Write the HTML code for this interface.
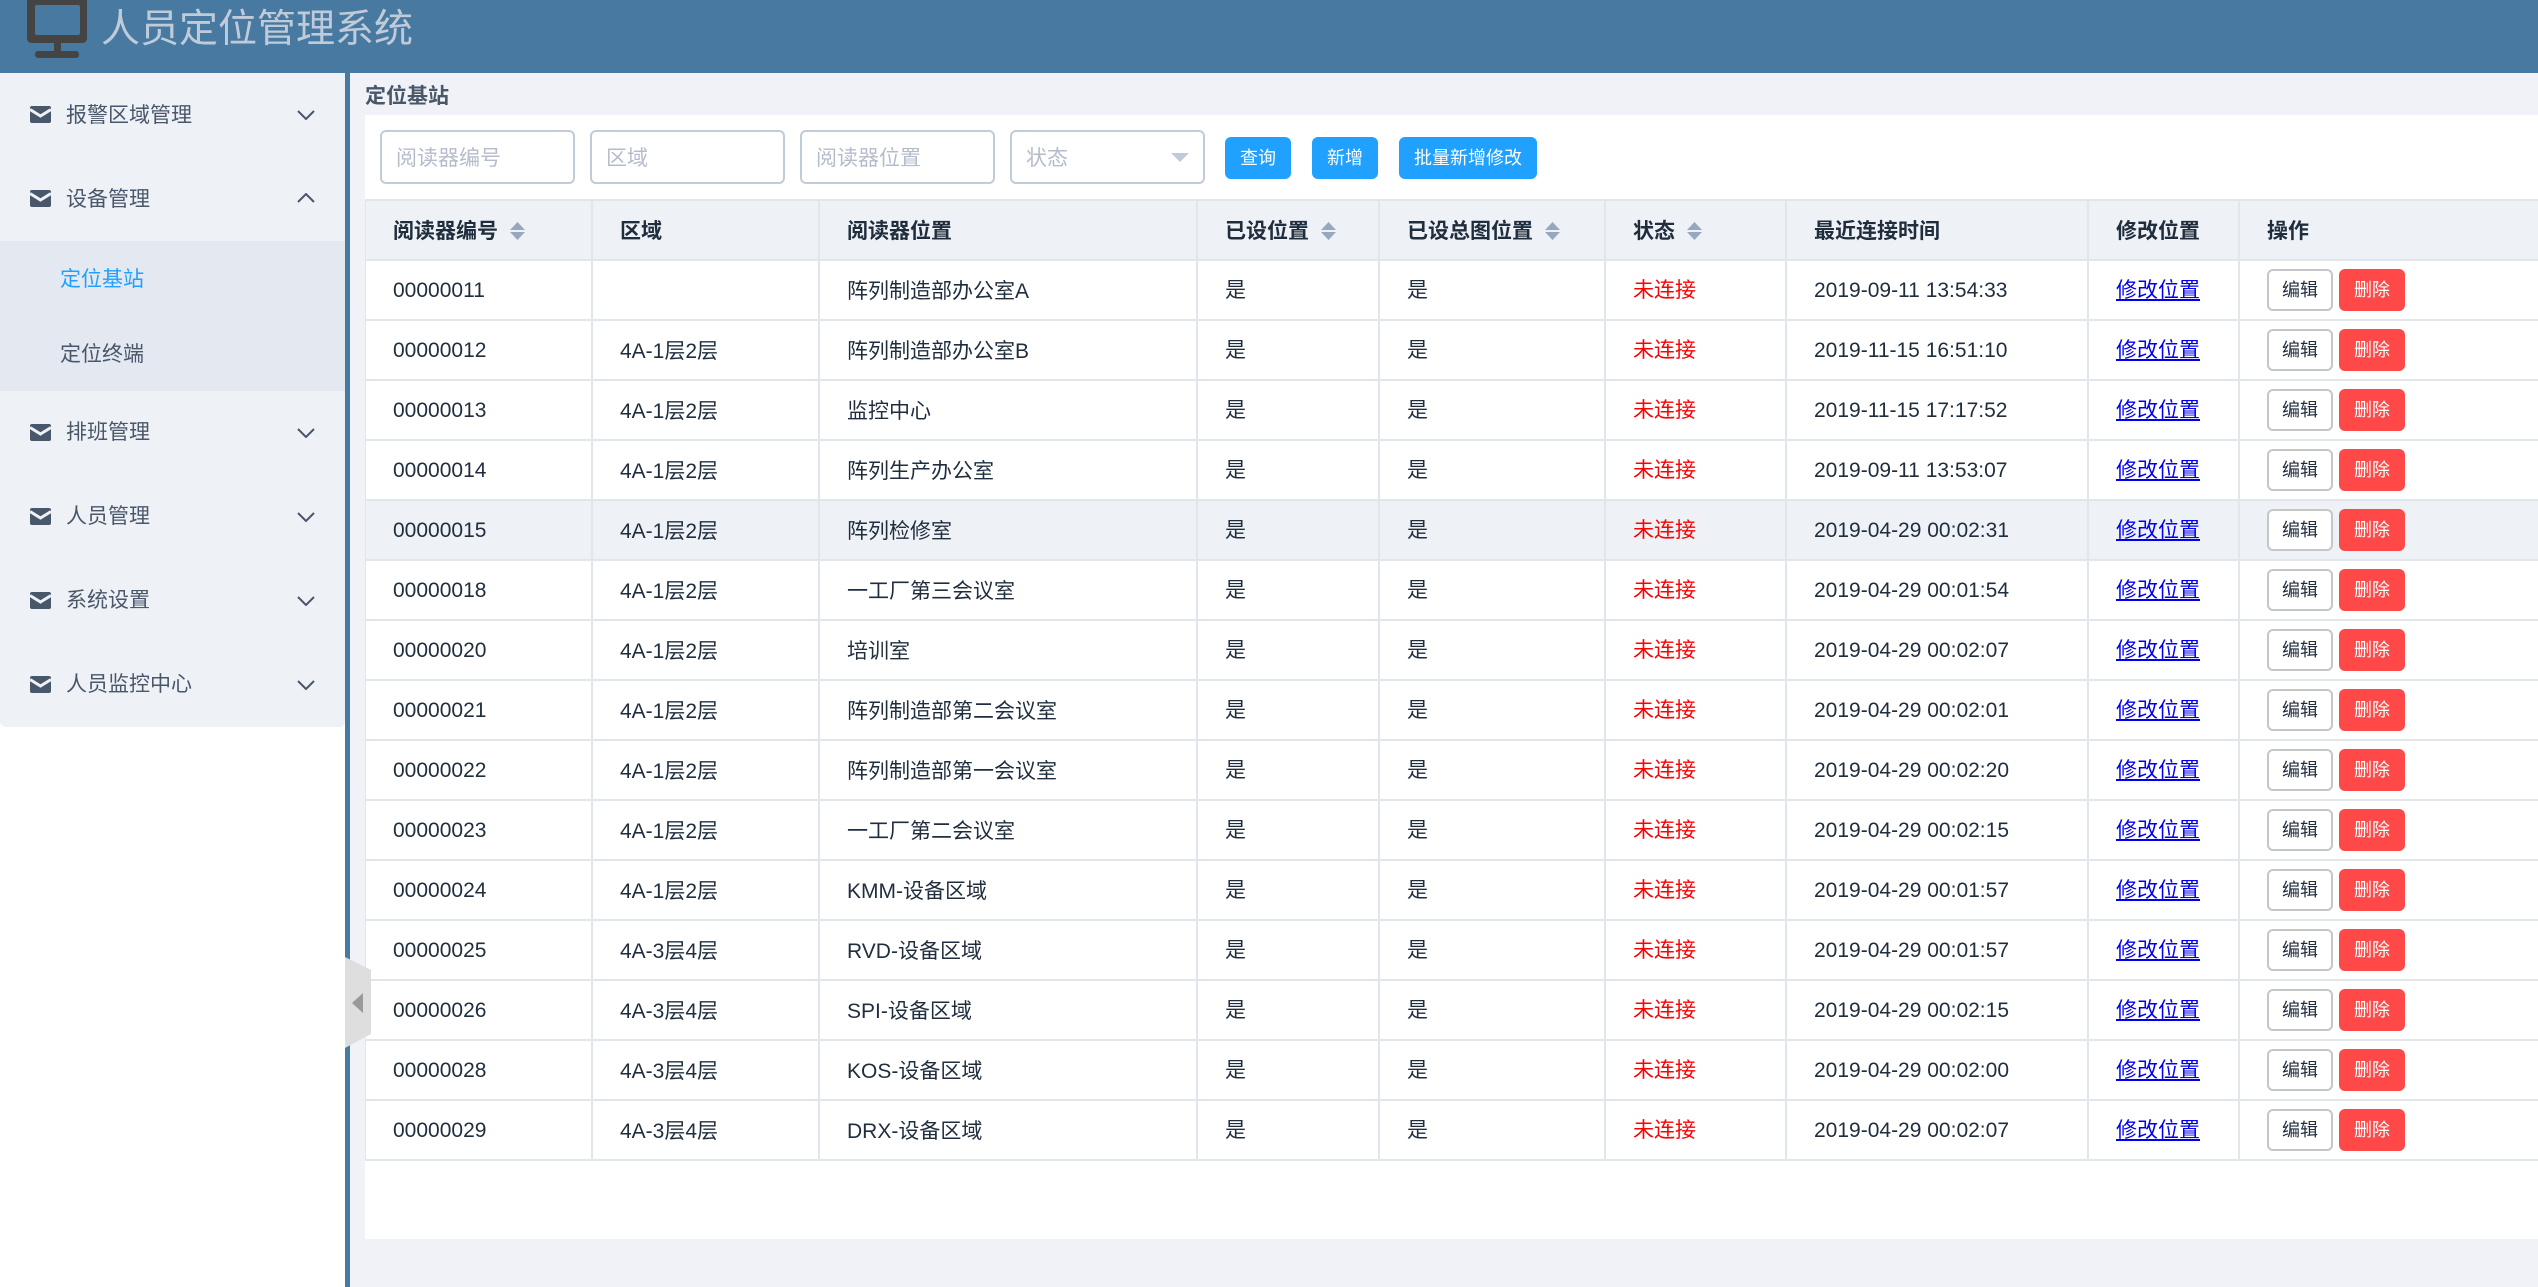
<!DOCTYPE html>
<html lang="zh"><head><meta charset="utf-8"><title>人员定位管理系统</title>
<style>
*{box-sizing:border-box}
html,body{margin:0;padding:0;width:2538px;height:1287px;overflow:hidden;background:#fff}
body{position:relative;font-family:"Liberation Sans","Noto Sans CJK SC",sans-serif;font-size:21px;color:#1f2d3d}
.abs{position:absolute}
#hdr{left:0;top:0;width:2538px;height:73px;background:#487aa1}
#title{left:101px;top:3px;height:54px;line-height:54px;font-size:39px;color:#bfcbd9;white-space:nowrap}
#side{left:0;top:73px;width:345px;height:654px;background:#eef1f6;border-radius:0 0 6px 6px}
#bar{left:345px;top:73px;width:5px;height:1214px;background:#487aa1}
#main{left:350px;top:73px;width:2188px;height:1214px;background:#f0f2f7}
#sub{left:0;top:241px;width:345px;height:150px;background:#e4e8f1}
.mi{left:66px;height:30px;line-height:30px;color:#48576a;white-space:nowrap}
.si{left:60px;height:30px;line-height:30px;color:#48576a;white-space:nowrap}
.ic{left:30px;width:21px;height:17px}
.ch{left:297px;width:18px;height:10px}
#ptitle{left:365px;top:82px;height:30px;line-height:30px;font-weight:bold;color:#48576a}
#panel{left:365px;top:115px;width:2173px;height:1124px;background:#fff}
.inp{top:130px;width:195px;height:54px;border:2px solid #c0ccda;border-radius:6px;background:#fff;color:#b4bccc;line-height:53px;padding-left:14px;white-space:nowrap}
.btn{top:137px;height:42px;line-height:42px;border-radius:6px;background:#20a0ff;color:#fff;font-size:18px;text-align:center;white-space:nowrap}
table{position:absolute;left:365px;top:199px;width:2173px;border-collapse:separate;border-spacing:0;table-layout:fixed;border-top:2px solid #e1e6ec}
th,td{height:60px;padding:0 0 0 27px;border-right:2px solid #e1e6ec;border-bottom:2px solid #e1e6ec;text-align:left;vertical-align:middle;white-space:nowrap;font-size:21px;color:#1f2d3d}
th{background:#eef1f6;font-weight:bold}
th:first-child,td:first-child{border-left:1px solid #e1e6ec}
th:last-child,td:last-child{border-right:0}
tr.h td{background:#eef1f6}
td.r{color:#f00}
td a{color:#00e;text-decoration:underline}
tbody td:nth-child(1),tbody td:nth-child(7){padding-top:2px}
tbody td:nth-child(4),tbody td:nth-child(5),tbody td:nth-child(6),tbody td:nth-child(8){padding-bottom:2px}
.s{display:inline-block;vertical-align:middle;width:15px;height:18px;margin-left:12px;position:relative;top:-1px}
.b1,.b2{display:inline-block;height:42px;width:66px;line-height:39px;border-radius:6px;font-size:18px;text-align:center;vertical-align:middle}
.b1{border:2px solid #c4c6c8;background:#fff;color:#1f2d3d}
.b2{border:2px solid #ff4949;background:#ff4949;color:#fff;margin-left:6px}
</style></head><body>
<svg width="0" height="0" style="position:absolute"><defs>
<g id="env"><rect width="21" height="17" rx="2" fill="#48576a"/><path d="M0 3.5 10.5 10 21 3.5" fill="none" stroke="#eef1f6" stroke-width="3"/></g>
<path id="sort" d="M7.5 0 15 8H0ZM0 10H15L7.500 18Z" fill="#97a8be"/>
</defs></svg>
<div class="abs" id="main"></div>
<div class="abs" id="hdr"></div>
<svg class="abs" style="left:27px;top:0" width="60" height="58"><path fill="#444" fill-rule="evenodd" d="M0 0H60V38Q60 43 55 43H34V51H49Q52 51 52 54.500T49 58H11Q8 58 8 54.500T11 51H27V43H5Q0 43 0 38ZM10 5Q8 5 8 7V33Q8 35 10 35H51Q53 35 53 33V7Q53 5 51 5Z"/></svg>
<div class="abs" id="title">人员定位管理系统</div>
<div class="abs" id="side"></div>
<div class="abs" id="sub"></div>
<div class="abs" id="bar"></div>

<svg class="abs ic" style="top:106px"><use href="#env"/></svg><div class="abs mi" style="top:101px">报警区域管理</div>
<svg class="abs ch" style="top:110px"><path d="M1 1 9 9 17 1" fill="none" stroke="#48576a" stroke-width="2"/></svg>
<svg class="abs ic" style="top:190px"><use href="#env"/></svg><div class="abs mi" style="top:185px">设备管理</div>
<svg class="abs ch" style="top:193px"><path d="M1 9 9 1 17 9" fill="none" stroke="#48576a" stroke-width="2"/></svg>
<div class="abs si" style="top:265px;color:#20a0ff">定位基站</div>
<div class="abs si" style="top:340px">定位终端</div>
<svg class="abs ic" style="top:424px"><use href="#env"/></svg><div class="abs mi" style="top:418px">排班管理</div>
<svg class="abs ch" style="top:428px"><path d="M1 1 9 9 17 1" fill="none" stroke="#48576a" stroke-width="2"/></svg>
<svg class="abs ic" style="top:508px"><use href="#env"/></svg><div class="abs mi" style="top:502px">人员管理</div>
<svg class="abs ch" style="top:512px"><path d="M1 1 9 9 17 1" fill="none" stroke="#48576a" stroke-width="2"/></svg>
<svg class="abs ic" style="top:592px"><use href="#env"/></svg><div class="abs mi" style="top:586px">系统设置</div>
<svg class="abs ch" style="top:596px"><path d="M1 1 9 9 17 1" fill="none" stroke="#48576a" stroke-width="2"/></svg>
<svg class="abs ic" style="top:676px"><use href="#env"/></svg><div class="abs mi" style="top:670px">人员监控中心</div>
<svg class="abs ch" style="top:680px"><path d="M1 1 9 9 17 1" fill="none" stroke="#48576a" stroke-width="2"/></svg>

<div class="abs" id="ptitle">定位基站</div>
<div class="abs" id="panel"></div>
<div class="abs inp" style="left:380px">阅读器编号</div>
<div class="abs inp" style="left:590px">区域</div>
<div class="abs inp" style="left:800px">阅读器位置</div>
<div class="abs inp" style="left:1010px">状态</div>
<svg class="abs" style="left:1171px;top:153px" width="18" height="10"><path d="M0 0H18L9 9Z" fill="#bfcbd9"/></svg>
<div class="abs btn" style="left:1225px;width:66px">查询</div>
<div class="abs btn" style="left:1312px;width:66px">新增</div>
<div class="abs btn" style="left:1399px;width:138px">批量新增修改</div>

<table>
<colgroup><col style="width:228px"><col style="width:227px"><col style="width:378px"><col style="width:182px"><col style="width:226px"><col style="width:181px"><col style="width:302px"><col style="width:151px"><col></colgroup>
<thead><tr><th>阅读器编号<svg class="s"><use href="#sort"/></svg></th><th>区域</th><th>阅读器位置</th><th>已设位置<svg class="s"><use href="#sort"/></svg></th><th>已设总图位置<svg class="s"><use href="#sort"/></svg></th><th>状态<svg class="s"><use href="#sort"/></svg></th><th>最近连接时间</th><th>修改位置</th><th>操作</th></tr></thead>
<tbody>
<tr><td>00000011</td><td></td><td>阵列制造部办公室A</td><td>是</td><td>是</td><td class="r">未连接</td><td>2019-09-11 13:54:33</td><td><a>修改位置</a></td><td><span class="b1">编辑</span><span class="b2">删除</span></td></tr>
<tr><td>00000012</td><td>4A-1层2层</td><td>阵列制造部办公室B</td><td>是</td><td>是</td><td class="r">未连接</td><td>2019-11-15 16:51:10</td><td><a>修改位置</a></td><td><span class="b1">编辑</span><span class="b2">删除</span></td></tr>
<tr><td>00000013</td><td>4A-1层2层</td><td>监控中心</td><td>是</td><td>是</td><td class="r">未连接</td><td>2019-11-15 17:17:52</td><td><a>修改位置</a></td><td><span class="b1">编辑</span><span class="b2">删除</span></td></tr>
<tr><td>00000014</td><td>4A-1层2层</td><td>阵列生产办公室</td><td>是</td><td>是</td><td class="r">未连接</td><td>2019-09-11 13:53:07</td><td><a>修改位置</a></td><td><span class="b1">编辑</span><span class="b2">删除</span></td></tr>
<tr class="h"><td>00000015</td><td>4A-1层2层</td><td>阵列检修室</td><td>是</td><td>是</td><td class="r">未连接</td><td>2019-04-29 00:02:31</td><td><a>修改位置</a></td><td><span class="b1">编辑</span><span class="b2">删除</span></td></tr>
<tr><td>00000018</td><td>4A-1层2层</td><td>一工厂第三会议室</td><td>是</td><td>是</td><td class="r">未连接</td><td>2019-04-29 00:01:54</td><td><a>修改位置</a></td><td><span class="b1">编辑</span><span class="b2">删除</span></td></tr>
<tr><td>00000020</td><td>4A-1层2层</td><td>培训室</td><td>是</td><td>是</td><td class="r">未连接</td><td>2019-04-29 00:02:07</td><td><a>修改位置</a></td><td><span class="b1">编辑</span><span class="b2">删除</span></td></tr>
<tr><td>00000021</td><td>4A-1层2层</td><td>阵列制造部第二会议室</td><td>是</td><td>是</td><td class="r">未连接</td><td>2019-04-29 00:02:01</td><td><a>修改位置</a></td><td><span class="b1">编辑</span><span class="b2">删除</span></td></tr>
<tr><td>00000022</td><td>4A-1层2层</td><td>阵列制造部第一会议室</td><td>是</td><td>是</td><td class="r">未连接</td><td>2019-04-29 00:02:20</td><td><a>修改位置</a></td><td><span class="b1">编辑</span><span class="b2">删除</span></td></tr>
<tr><td>00000023</td><td>4A-1层2层</td><td>一工厂第二会议室</td><td>是</td><td>是</td><td class="r">未连接</td><td>2019-04-29 00:02:15</td><td><a>修改位置</a></td><td><span class="b1">编辑</span><span class="b2">删除</span></td></tr>
<tr><td>00000024</td><td>4A-1层2层</td><td>KMM-设备区域</td><td>是</td><td>是</td><td class="r">未连接</td><td>2019-04-29 00:01:57</td><td><a>修改位置</a></td><td><span class="b1">编辑</span><span class="b2">删除</span></td></tr>
<tr><td>00000025</td><td>4A-3层4层</td><td>RVD-设备区域</td><td>是</td><td>是</td><td class="r">未连接</td><td>2019-04-29 00:01:57</td><td><a>修改位置</a></td><td><span class="b1">编辑</span><span class="b2">删除</span></td></tr>
<tr><td>00000026</td><td>4A-3层4层</td><td>SPI-设备区域</td><td>是</td><td>是</td><td class="r">未连接</td><td>2019-04-29 00:02:15</td><td><a>修改位置</a></td><td><span class="b1">编辑</span><span class="b2">删除</span></td></tr>
<tr><td>00000028</td><td>4A-3层4层</td><td>KOS-设备区域</td><td>是</td><td>是</td><td class="r">未连接</td><td>2019-04-29 00:02:00</td><td><a>修改位置</a></td><td><span class="b1">编辑</span><span class="b2">删除</span></td></tr>
<tr><td>00000029</td><td>4A-3层4层</td><td>DRX-设备区域</td><td>是</td><td>是</td><td class="r">未连接</td><td>2019-04-29 00:02:07</td><td><a>修改位置</a></td><td><span class="b1">编辑</span><span class="b2">删除</span></td></tr>
</tbody></table>

<svg class="abs" style="left:345px;top:957px" width="26" height="91"><path d="M0 0 26 13V77L0 91Z" fill="#dedede"/><path d="M7 46 18 36V56Z" fill="#999"/></svg>
</body></html>
